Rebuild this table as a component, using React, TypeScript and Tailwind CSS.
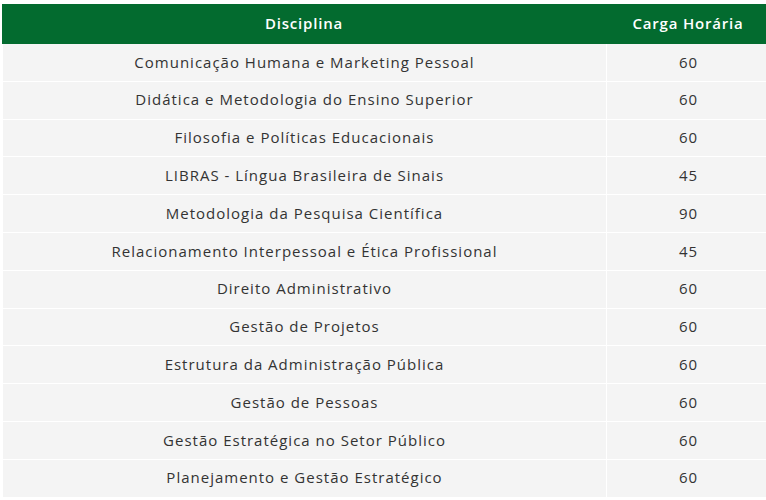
import React from "react";

const rows: [string, string][] = [
  ["Comunicação Humana e Marketing Pessoal", "60"],
  ["Didática e Metodologia do Ensino Superior", "60"],
  ["Filosofia e Políticas Educacionais", "60"],
  ["LIBRAS - Língua Brasileira de Sinais", "45"],
  ["Metodologia da Pesquisa Científica", "90"],
  ["Relacionamento Interpessoal e Ética Profissional", "45"],
  ["Direito Administrativo", "60"],
  ["Gestão de Projetos", "60"],
  ["Estrutura da Administração Pública", "60"],
  ["Gestão de Pessoas", "60"],
  ["Gestão Estratégica no Setor Público", "60"],
  ["Planejamento e Gestão Estratégico", "60"],
];

export default function App() {
  return (
    <div
      className="w-[766px] h-[500px] overflow-hidden bg-white pl-[2px] pt-[4px]"
      style={{ fontFamily: '"Open Sans", "Noto Sans", sans-serif' }}
    >
      <div className="w-[764px]">
        <div className="flex h-[40px] bg-[#036b2f] text-white font-semibold text-[15px] tracking-[0.8px]">
          <div className="w-[604px] flex items-center justify-center pb-[1px]">Disciplina</div>
          <div className="w-[160px] flex items-center justify-center pl-[4px] pb-[1px]">Carga Horária</div>
        </div>
        {rows.map(([name, hours]) => (
          <div key={name} className="flex h-[37.8px] border-b border-white text-[15px] text-[#333333] tracking-[1px]">
            <div className="w-[604px] flex items-center justify-center bg-[#f4f4f4] border-l border-white pb-[1px]">
              {name}
            </div>
            <div className="w-[160px] flex items-center justify-center bg-[#f4f4f4] border-l border-white pl-[4px] pb-[1px]">
              {hours}
            </div>
          </div>
        ))}
      </div>
    </div>
  );
}
